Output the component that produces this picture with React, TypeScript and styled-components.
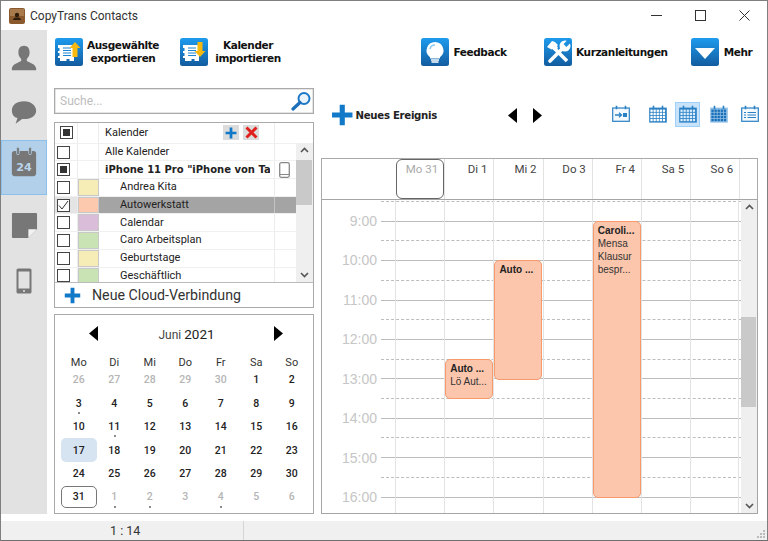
import React from "react";
import styled, { createGlobalStyle } from "styled-components";

const Global = createGlobalStyle`
  html, body { margin: 0; padding: 0; background: #fff; }
  * { box-sizing: border-box; }
  body { font-family: Roboto, "Liberation Sans", sans-serif; color: #222; }
`;

const Win = styled.div`
  width: 768px; height: 541px; display: flex; flex-direction: column;
  border: 1px solid #7f7f7f; border-bottom-color: #6f6f6f; background: #fff; overflow: hidden;
`;
const TitleBar = styled.div`
  height: 29px; display: flex; align-items: center; padding-left: 8px; flex: none;
`;
const TitleText = styled.span`
  margin-left: 5px; font-size: 12px; color: #333; width: 120px; white-space: nowrap;
`;
const WinButtons = styled.div`
  margin-left: auto; display: flex; align-items: center; gap: 33px; padding-right: 17px;
`;
const Middle = styled.div`
  flex: 1; display: flex; min-height: 0;
`;
const Sidebar = styled.nav`
  width: 46px; flex: none; background: #e2e2e2; display: flex; flex-direction: column;
`;
const SideItem = styled.div<{ $active?: boolean }>`
  height: 55px; background: ${p => (p.$active ? "#b3d0ea" : "transparent")};
  border: 1px solid ${p => (p.$active ? "#8cc0ec" : "transparent")};
  display: flex; align-items: center; justify-content: center;
`;
const Content = styled.div`
  flex: 1; display: flex; flex-direction: column; min-width: 0;
`;
const Toolbar = styled.div`
  height: 55px; flex: none; display: flex; align-items: flex-start; padding: 8px 0 0 8px;
`;
const ToolButton = styled.div<{ $ml?: number }>`
  display: flex; align-items: center; height: 28px; margin-left: ${p => p.$ml ?? 0}px;
`;
const ToolLabel = styled.div<{ $w: number }>`
  width: ${p => p.$w}px; margin-left: 4px; font: bold 10.5px/13px "DejaVu Sans", sans-serif;
  text-align: center; color: #111; white-space: nowrap; letter-spacing: -0.4px;
`;
const Panels = styled.div`
  flex: 1; display: flex; padding: 3px 0 0 7px; min-height: 0;
`;
const LeftCol = styled.div`
  width: 260px; flex: none; display: flex; flex-direction: column;
`;
const Search = styled.div`
  height: 26px; border: 1px solid #aaa; box-shadow: inset 0 0 0 0.5px #ccc; display: flex; align-items: center;
  padding: 0 1px 0 5px; justify-content: space-between; font-size: 12px; color: #bdbdbd;
`;
const CalTable = styled.div`
  margin-top: 8px; height: 160px; border: 1px solid #aaa; border-bottom: none; display: flex; overflow: hidden;
`;
const TableMain = styled.div`
  flex: 1; min-width: 0; display: flex; flex-direction: column; overflow: hidden;
`;
const Row = styled.div<{ $head?: boolean }>`
  display: grid; grid-template-columns: 23px 21px 176px 22px; flex: none;
  height: ${p => (p.$head ? "20.7px" : "17.7px")}; border-bottom: 1px solid #f0f0f0;
  font-size: 11px; line-height: 16px;
`;
const CheckCell = styled.div<{ $sel?: boolean; $head?: boolean }>`
  display: flex; align-items: center; padding-left: ${p => (p.$head ? "5px" : "2px")};
  border-right: 1px solid #ececec; background: ${p => (p.$sel ? "#e4e4e4" : "transparent")};
`;
const Box = styled.div`
  width: 13px; height: 13px; border: 1px solid #444; background: #fff;
  display: flex; align-items: center; justify-content: center;
`;
const Inner = styled.div`
  width: 7px; height: 7px; background: #333;
`;
const Swatch = styled.div<{ $c?: string }>`
  background: ${p => p.$c ?? "transparent"};
  border: ${p => (p.$c ? "1px solid #c8c8c8" : "none")};
  border-right: 1px solid ${p => (p.$c ? "#c8c8c8" : "#ececec")};
`;
const NameCell = styled.div<{ $sel?: boolean; $indent?: boolean; $bold?: boolean }>`
  padding-left: ${p => (p.$indent ? "21px" : "6px")};
  background: ${p => (p.$sel ? "#a4a4a4" : "transparent")};
  font: ${p => (p.$bold ? 'bold 10px/16px "DejaVu Sans", sans-serif' : "inherit")};
  border-right: 1px solid ${p => (p.$sel ? "#c4c4c4" : "#ececec")};
  overflow: hidden; white-space: nowrap; padding-right: 4px;
  display: flex; align-items: center; color: #222; position: relative;
`;
const NameClip = styled.span`
  display: block; overflow: hidden; width: 100%;
`;
const HeadActions = styled.div`
  margin-left: auto; display: flex; gap: 4px; padding-right: 11px;
`;
const MiniBtn = styled.div`
  width: 16px; height: 15px; background: #dcdcdc; display: flex; align-items: center; justify-content: center;
`;
const DevCell = styled.div<{ $sel?: boolean }>`
  display: flex; align-items: center; justify-content: center; padding-right: 3px;
  border-right: 1px solid #ececec; background: ${p => (p.$sel ? "#a4a4a4" : "transparent")};
`;
const VScroll = styled.div<{ $w: number; $fill?: boolean }>`
  width: ${p => p.$w}px; flex: ${p => (p.$fill ? 1 : "none")}; background: #efefef; display: flex; flex-direction: column; position: relative;
  align-items: center; justify-content: space-between; padding: 4px 0;
`;
const Thumb = styled.div<{ $top: number; $h: number }>`
  position: absolute; left: 0; right: 1px; top: ${p => p.$top}px; height: ${p => p.$h}px; background: #c9c9c9;
`;
const ScrollTop = styled.div`
  width: 17px; flex: none; display: flex; flex-direction: column;
`;
const ScrollHead = styled.div`
  height: 20px; background: #fff; flex: none;
`;
const CloudRow = styled.div`
  height: 26px; border: 1px solid #aaa; border-top: 1px solid #bbb; display: flex; align-items: center; padding-left: 9px; gap: 11px;
  font-size: 14.2px; color: #333; white-space: nowrap;
`;
const MiniCal = styled.div`
  margin-top: 6px; height: 200px; border: 1px solid #aaa; padding: 0 4px 0 6px;
`;
const MiniHead = styled.div`
  height: 36px; display: flex; align-items: center; justify-content: center; position: relative;
  padding: 1px 26px 0 28px;
`;
const MonthName = styled.div`
  flex: 1; text-align: center; font-size: 12px; color: #444; padding-left: 1px;
`;
const YearName = styled.span`
  font-size: 13.5px; color: #222; margin-left: 3px;
`;
const MiniGrid = styled.div`
  display: grid; grid-template-columns: repeat(7, 35.5px); grid-template-rows: 14.3px repeat(6, 23.4px); margin-top: 3px;
`;
const DowCell = styled.div`
  height: 14.3px; text-align: center; font-size: 11px; line-height: 18px; color: #333;
`;
const DayCell = styled.div<{ $muted?: boolean; $sel?: boolean; $today?: boolean }>`
  position: relative; display: flex; align-items: center; justify-content: center; font-size: 10.5px;
  font-weight: 500; color: ${p => (p.$muted ? "#b5b5b5" : "#222")};
  background: ${p => (p.$sel ? "#d6e4f2" : "transparent")};
  border-radius: 5px;
  border: ${p => (p.$today ? "1px solid #777" : "none")};
  margin: ${p => (p.$today ? "1px 0" : "0")};
`;
const Dot = styled.i`
  position: absolute; width: 2px; height: 2px; background: #666; left: 17px; bottom: 1px; border-radius: 50%;
`;
const RightCol = styled.div`
  width: 437px; margin-left: 7px; flex: none; display: flex; flex-direction: column;
`;
const RightBar = styled.div`
  height: 70px; flex: none; display: flex; align-items: flex-start; padding: 14px 0 0 10px;
`;
const NewEvent = styled.div`
  display: flex; align-items: center; height: 26px; gap: 2px; font: bold 10.2px "DejaVu Sans", sans-serif; color: #222;
  width: 106px; white-space: nowrap; letter-spacing: -0.3px;
`;
const NavArrows = styled.div`
  margin-left: 71px; display: flex; gap: 16px; height: 26px; align-items: center;
`;
const ViewIcons = styled.div`
  margin: -1px -3px 0 auto; display: flex; align-items: center; height: 26px;
`;
const ViewIcon = styled.div<{ $on?: boolean; $w: number }>`
  width: ${p => p.$w}px; height: 25px; display: flex; align-items: center; justify-content: center;
  background: ${p => (p.$on ? "#c9e3fb" : "transparent")};
  border: 1px solid ${p => (p.$on ? "#9ed0f9" : "transparent")};
`;
const DaysHeader = styled.div`
  height: 41px; flex: none; border: 1px solid #aaa; border-bottom: none; display: flex;
`;
const HeaderGap = styled.div`
  width: 74px; flex: none;
`;
const HeadDay = styled.div<{ $today?: boolean }>`
  width: 49.2px; flex: none; border-right: 1px solid #e2e2e2; text-align: right; padding: 2px 6px 0 0;
  font-size: 11.5px; line-height: 16px; color: ${p => (p.$today ? "#aaa" : "#444")};
  position: relative;
`;
const TodayRing = styled.div`
  position: absolute; left: 0; right: 0; top: 0; bottom: 0; border: 1px solid #666; border-radius: 6px;
`;
const GridBody = styled.div`
  height: 315px; flex: none; border: 1px solid #a5a5a5; display: flex; overflow: hidden;
`;
const TimeCol = styled.div`
  width: 59px; flex: none; padding-top: 2px; display: flex; flex-direction: column; align-items: flex-end; overflow: hidden;
`;
const TimeLabel = styled.div`
  flex: none; height: 39.43px; padding-right: 4px; font: 14px/39.43px "Liberation Sans", sans-serif; color: #c6c6c6;
`;
const Canvas = styled.div`
  flex: 1; position: relative; overflow: hidden;
`;
const Slot = styled.div<{ $half?: boolean; $first?: boolean }>`
  height: ${p => (p.$first ? "2px" : "19.715px")};
  border-bottom: 1px ${p => (p.$half ? "dashed #bdbdbd" : "solid #bcbcbc")};
`;
const DayCols = styled.div`
  position: absolute; top: 0; bottom: 0; left: 14px; display: flex;
`;
const DayCol = styled.div`
  width: 49.2px; flex: none; position: relative; border-left: 1px solid #e3e3e3;
  &:last-child { border-right: 1px solid #e3e3e3; }
`;
const Event = styled.div<{ $top: number; $h: number }>`
  position: absolute; left: 0; width: 48px; top: ${p => p.$top}px; height: ${p => p.$h}px;
  background: #fcc6ac; border: 1px solid #f79a6b; border-radius: 5px; padding: 2px 3px 0 4px;
  font: 10px/13px "Liberation Sans", sans-serif; color: #333; overflow: hidden;
`;
const EvTitle = styled.div`
  font-weight: 700; color: #222; white-space: nowrap;
`;
const EvLine = styled.div`
  white-space: nowrap;
`;
const StatusBar = styled.div`
  height: 19px; flex: none; margin-top: 7px; background: #f0f0f0; display: flex; align-items: center; font-size: 12.5px; color: #333; position: relative;
`;
const StatusCount = styled.div`
  width: 243px; padding-left: 109px; border-right: 1px solid #d5d5d5; height: 100%; line-height: 20px; white-space: nowrap;
`;
const Grip = styled.svg`
  position: absolute; right: 1px; bottom: 1px;
`;

const Tile: React.FC<{ id: string; children: React.ReactNode }> = ({ id, children }) => (
  <svg width="28" height="28" viewBox="0 0 28 28">
    <defs>
      <linearGradient id={id} x1="0" y1="0" x2="0" y2="1">
        <stop offset="0" stopColor="#1e9bee" />
        <stop offset="1" stopColor="#125c9f" />
      </linearGradient>
    </defs>
    <rect width="28" height="28" rx="2.5" fill={`url(#${id})`} />
    {children}
  </svg>
);

const Ticket = () => (
  <g>
    <path d="M3 7h16v16h-4.5v-2h-3v2H5v-3H3v-2h1.5v-3H3v-2h1.5V10H3z" fill="#fff" />
    <path d="M8 10h8M8 12.5h8M8 15h8M8 17.5h8" stroke="#1a85d4" strokeWidth="1.2" />
  </g>
);

const Plus: React.FC<{ s: number }> = ({ s }) => (
  <svg width={s} height={s} viewBox="0 0 22 22">
    <path d="M8.5 1h5v7.5H21v5h-7.5V21h-5v-7.5H1v-5h7.5z" fill="#1278c8" />
  </svg>
);

const Tri: React.FC<{ dir: "l" | "r" }> = ({ dir }) => (
  <svg width="9" height="15" viewBox="0 0 9 15">
    <path d={dir === "l" ? "M9 0v15L0 7.5z" : "M0 0v15l9-7.5z"} fill="#000" />
  </svg>
);

const Chev: React.FC<{ up?: boolean }> = ({ up }) => (
  <svg width="9" height="6" viewBox="0 0 9 6">
    <path d={up ? "M1 5l3.5-3.5L8 5" : "M1 1l3.5 3.5L8 1"} stroke="#555" strokeWidth="1.6" fill="none" />
  </svg>
);

const CalGlyph: React.FC<{ kind: "import" | "week" | "day" | "month" | "list" }> = ({ kind }) => {
  const c = "#2a80c4";
  if (kind === "import" || kind === "list") {
    return (
      <svg width="18" height="18" viewBox="0 0 18 18">
        <rect x="0.7" y="3" width="16.6" height="13.3" fill="#f3f9fe" stroke={c} strokeWidth="1.2" />
        <path d="M4.5 0.8v3.5M13.5 0.8v3.5" stroke={c} strokeWidth="1.6" />
        {kind === "import" ? (
          <>
            <path d="M3 10h6M7 7.8l2.5 2.2L7 12.2" stroke={c} strokeWidth="1.3" fill="none" />
            <rect x="11" y="8" width="4" height="4" fill={c} />
          </>
        ) : (
          <path d="M3 7.5h2M6.5 7.5h8.5M3 10h2M6.5 10h8.5M3 12.5h2M6.5 12.5h8.5" stroke={c} strokeWidth="1.2" />
        )}
      </svg>
    );
  }
  const cellFill = kind === "month" ? "#1a70b8" : kind === "day" ? "#d8ecfd" : "#fff";
  const cells: React.ReactNode[] = [];
  for (let r = 0; r < 4; r++)
    for (let k = 0; k < 5; k++)
      cells.push(<rect key={r + "-" + k} x={1.4 + k * 3.1} y={4.6 + r * 3.1} width="2.3" height="2.3" fill={cellFill} />);
  return (
    <svg width="18" height="18" viewBox="0 0 18 18">
      <rect x="0.2" y="2.6" width="17.6" height="15" fill={kind === "month" ? "#8dbde4" : c} />
      <path d="M4.5 0.8v3.5M13.5 0.8v3.5" stroke={c} strokeWidth="1.6" />
      {cells}
    </svg>
  );
};

const rows = [
  { name: "Alle Kalender" },
  { name: 'iPhone 11 Pro "iPhone von Tat', bold: true, tri: true, device: true },
  { name: "Andrea Kita", color: "#f6edb6", indent: true },
  { name: "Autowerkstatt", color: "#fdc9ae", indent: true, sel: true },
  { name: "Calendar", color: "#d9bdd9", indent: true },
  { name: "Caro Arbeitsplan", color: "#cae3b5", indent: true },
  { name: "Geburtstage", color: "#f6edb6", indent: true },
  { name: "Geschäftlich", color: "#cae3b5", indent: true },
];

const dow = ["Mo", "Di", "Mi", "Do", "Fr", "Sa", "So"];
type D = { t: number; m?: boolean; dot?: boolean; sel?: boolean; today?: boolean };
const days: D[] = [
  ...[26, 27, 28, 29, 30].map(t => ({ t, m: true })),
  { t: 1 }, { t: 2 }, { t: 3, dot: true },
  ...[4, 5, 6, 7, 8, 9, 10].map(t => ({ t })),
  { t: 11, dot: true },
  ...[12, 13, 14, 15, 16].map(t => ({ t })),
  { t: 17, sel: true },
  ...[18, 19, 20, 21, 22, 23, 24, 25, 26, 27, 28, 29, 30].map(t => ({ t })),
  { t: 31, today: true },
  { t: 1, m: true, dot: true }, { t: 2, m: true, dot: true }, { t: 3, m: true }, { t: 4, m: true, dot: true }, { t: 5, m: true }, { t: 6, m: true },
];

const headDays = ["Mo 31", "Di 1", "Mi 2", "Do 3", "Fr 4", "Sa 5", "So 6"];
const hours = [9, 10, 11, 12, 13, 14, 15, 16];
const H = 39.43;
const top = (h: number) => 21 + (h - 9) * H;

const slotFlags = Array.from({ length: 16 }, (_, i) => i % 2 === 1);

export default function App() {
  return (
    <Win>
      <Global />
      <TitleBar>
        <svg width="16" height="16" viewBox="0 0 16 16">
          <rect width="16" height="16" rx="2" fill="#8a5a2e" />
          <rect x="1" y="1" width="14" height="7" fill="#a97b4c" />
          <circle cx="8" cy="7" r="2.2" fill="#2f1c0c" />
          <path d="M4 12c0-2 2-2.5 4-2.5s4 .5 4 2.5z" fill="#2f1c0c" />
        </svg>
        <TitleText>CopyTrans Contacts</TitleText>
        <WinButtons>
          <svg width="11" height="11" viewBox="0 0 11 11"><path d="M0 5.5h11" stroke="#333" strokeWidth="1" /></svg>
          <svg width="11" height="11" viewBox="0 0 11 11"><rect x="0.5" y="0.5" width="10" height="10" fill="none" stroke="#333" /></svg>
          <svg width="11" height="11" viewBox="0 0 11 11"><path d="M0.5 0.5l10 10M10.5 0.5l-10 10" stroke="#333" /></svg>
        </WinButtons>
      </TitleBar>
      <Middle>
        <Sidebar>
          <SideItem>
            <svg width="28" height="28" viewBox="0 0 30 30">
              <path d="M15 2c-4 0-6 3-6 7 0 3 1 5 3 7v2c-2 2-9 3-10 8v2h26v-2c-1-5-8-6-10-8v-2c2-2 3-4 3-7 0-4-2-7-6-7z" fill="#777" />
            </svg>
          </SideItem>
          <SideItem>
            <svg width="28" height="25" viewBox="0 0 30 26">
              <path d="M15 1C7 1 2 5 2 11c0 4 2 7 6 8l-2 6 7-5h2c8 0 13-4 13-9s-5-10-13-10z" fill="#777" />
            </svg>
          </SideItem>
          <SideItem $active>
            <svg width="28" height="36" viewBox="0 0 30 38" style={{ marginBottom: 8 }}>
              <rect x="2" y="5" width="26" height="27" rx="3" fill="#777" />
              <rect x="7" y="1" width="3" height="8" rx="1.5" fill="#777" stroke="#b3d0ea" strokeWidth="0.8" />
              <rect x="20" y="1" width="3" height="8" rx="1.5" fill="#777" stroke="#b3d0ea" strokeWidth="0.8" />
              <text x="15" y="27" textAnchor="middle" fontFamily="DejaVu Sans" fontWeight="700" fontSize="12" fill="#b9d4ea">24</text>
            </svg>
          </SideItem>
          <SideItem>
            <svg width="27" height="27" viewBox="0 0 28 28" style={{ marginTop: 5 }}>
              <path d="M2 1h24a1 1 0 0 1 1 1v16l-9 9H2a1 1 0 0 1-1-1V2a1 1 0 0 1 1-1z" fill="#777" />
              <path d="M27 18l-9 9v-9z" fill="#f2f2f2" />
            </svg>
          </SideItem>
          <SideItem>
            <svg width="16" height="26" viewBox="0 0 16 26" style={{ marginTop: 6 }}>
              <rect x="0.5" y="0.5" width="15" height="25" rx="1.5" fill="#777" />
              <rect x="2.5" y="3.5" width="11" height="17" fill="#e2e2e2" />
              <circle cx="8" cy="23" r="1" fill="#e2e2e2" />
            </svg>
          </SideItem>
        </Sidebar>
        <Content>
          <Toolbar>
            <ToolButton>
              <Tile id="t1">
                <Ticket />
                <path d="M20 4l5.5 6H22.5v9h-5v-9h-3z" fill="#f7b90f" />
              </Tile>
              <ToolLabel $w={72}>Ausgewählte<br />exportieren</ToolLabel>
            </ToolButton>
            <ToolButton $ml={21}>
              <Tile id="t2">
                <Ticket />
                <path d="M17.5 4h5v9h3l-5.5 6-5.5-6h3z" fill="#f7b90f" />
              </Tile>
              <ToolLabel $w={72}>Kalender<br />importieren</ToolLabel>
            </ToolButton>
            <ToolButton $ml={137}>
              <Tile id="t3">
                <path d="M14 4a8.5 8.5 0 0 0-5 15.3v1.2h10v-1.2A8.5 8.5 0 0 0 14 4z" fill="#fff" />
                <path d="M10 22h8M10.5 24h7" stroke="#fff" strokeWidth="1.3" />
                <path d="M9 11a5 5 0 0 1 5-4" stroke="#8ccaf5" strokeWidth="1.5" fill="none" />
              </Tile>
              <ToolLabel $w={54}>Feedback</ToolLabel>
            </ToolButton>
            <ToolButton $ml={37}>
              <Tile id="t4">
                <path d="M9 9L23 23" stroke="#fff" strokeWidth="3.6" />
                <path d="M3 9l5-6 3 1 3 3-1 1 1 2-3 3-2-2-1.500 0.500z" fill="#fff" />
                <path d="M20 9L6 23" stroke="#fff" strokeWidth="3.6" strokeLinecap="round" />
                <circle cx="21" cy="8" r="5.500" fill="#fff" />
                <path d="M21 7.500L26 2.500" stroke="#1b8ee0" strokeWidth="4" />
              </Tile>
              <ToolLabel $w={91}>Kurzanleitungen</ToolLabel>
            </ToolButton>
            <ToolButton $ml={24}>
              <Tile id="t5">
                <path d="M4 10h20L14 21z" fill="#fff" />
              </Tile>
              <ToolLabel $w={30}>Mehr</ToolLabel>
            </ToolButton>
          </Toolbar>
          <Panels>
            <LeftCol>
              <Search>
                <span>Suche...</span>
                <svg width="22" height="20" viewBox="0 0 22 20">
                  <circle cx="14" cy="7.5" r="5.5" fill="#eaf4fc" stroke="#1c78c4" strokeWidth="2" />
                  <path d="M10 11.5L3 18" stroke="#1c6fb8" strokeWidth="3.2" strokeLinecap="round" />
                </svg>
              </Search>
              <CalTable>
                <TableMain>
                  <Row $head>
                    <CheckCell $head><Box><Inner /></Box></CheckCell>
                    <Swatch />
                    <NameCell>
                      Kalender
                      <HeadActions>
                        <MiniBtn><Plus s={12} /></MiniBtn>
                        <MiniBtn>
                          <svg width="13" height="13" viewBox="0 0 13 13"><path d="M1.5 1.5l10 10M11.5 1.5l-10 10" stroke="#e0201c" strokeWidth="3" /></svg>
                        </MiniBtn>
                      </HeadActions>
                    </NameCell>
                    <DevCell />
                  </Row>
                  {rows.map(r => (
                    <Row key={r.name}>
                      <CheckCell $sel={r.sel}>
                        <Box>
                          {r.tri && <Inner />}
                          {r.sel && (
                            <svg width="11" height="11" viewBox="0 0 11 11"><path d="M1 5.5l3 3.5 6-8" stroke="#333" strokeWidth="1" fill="none" /></svg>
                          )}
                        </Box>
                      </CheckCell>
                      <Swatch $c={r.color} />
                      <NameCell $sel={r.sel} $indent={r.indent} $bold={r.bold}><NameClip>{r.name}</NameClip></NameCell>
                      <DevCell $sel={r.sel}>
                        {r.device && (
                          <svg width="11" height="16" viewBox="0 0 11 16">
                            <rect x="0.7" y="0.7" width="9.6" height="14.6" rx="1.5" fill="none" stroke="#888" strokeWidth="1.3" />
                            <path d="M1 12.5h9" stroke="#888" />
                          </svg>
                        )}
                      </DevCell>
                    </Row>
                  ))}
                </TableMain>
                <ScrollTop>
                  <ScrollHead />
                  <VScroll $w={17} $fill>
                    <Chev up />
                    <Thumb $top={17} $h={45} />
                    <Chev />
                  </VScroll>
                </ScrollTop>
              </CalTable>
              <CloudRow>
                <Plus s={17} />
                Neue Cloud-Verbindung
              </CloudRow>
              <MiniCal>
                <MiniHead>
                  <Tri dir="l" />
                  <MonthName>Juni<YearName>2021</YearName></MonthName>
                  <Tri dir="r" />
                </MiniHead>
                <MiniGrid>
                  {dow.map(d => <DowCell key={d}>{d}</DowCell>)}
                  {days.map((d, i) => (
                    <DayCell key={i} $muted={d.m} $sel={d.sel} $today={d.today}>
                      {d.t}
                      {d.dot && <Dot />}
                    </DayCell>
                  ))}
                </MiniGrid>
              </MiniCal>
            </LeftCol>
            <RightCol>
              <RightBar>
                <NewEvent>
                  <Plus s={24} />
                  Neues Ereignis
                </NewEvent>
                <NavArrows>
                  <Tri dir="l" />
                  <Tri dir="r" />
                </NavArrows>
                <ViewIcons>
                  <ViewIcon $w={41}><CalGlyph kind="import" /></ViewIcon>
                  <ViewIcon $w={34}><CalGlyph kind="week" /></ViewIcon>
                  <ViewIcon $w={25} $on><CalGlyph kind="day" /></ViewIcon>
                  <ViewIcon $w={38}><CalGlyph kind="month" /></ViewIcon>
                  <ViewIcon $w={23}><CalGlyph kind="list" /></ViewIcon>
                </ViewIcons>
              </RightBar>
              <DaysHeader>
                <HeaderGap />
                {headDays.map((d, i) => (
                  <HeadDay key={d} $today={i === 0}>
                    {d}
                    {i === 0 && <TodayRing />}
                  </HeadDay>
                ))}
              </DaysHeader>
              <GridBody>
                <TimeCol>
                  {hours.map(h => <TimeLabel key={h}>{h}:00</TimeLabel>)}
                </TimeCol>
                <Canvas>
                  <Slot $first $half />
                  {slotFlags.map((half, i) => <Slot key={i} $half={half} />)}
                  <DayCols>
                    {headDays.map((d, i) => (
                      <DayCol key={d}>
                        {i === 1 && (
                          <Event $top={top(12.5)} $h={H + 1}>
                            <EvTitle>Auto ...</EvTitle>
                            <EvLine>Lö Aut...</EvLine>
                          </Event>
                        )}
                        {i === 2 && (
                          <Event $top={top(10)} $h={H * 3 + 1}>
                            <EvTitle>Auto ...</EvTitle>
                          </Event>
                        )}
                        {i === 4 && (
                          <Event $top={top(9)} $h={H * 7 + 1}>
                            <EvTitle>Caroli...</EvTitle>
                            <EvLine>Mensa</EvLine>
                            <EvLine>Klausur</EvLine>
                            <EvLine>bespr...</EvLine>
                          </Event>
                        )}
                      </DayCol>
                    ))}
                  </DayCols>
                </Canvas>
                <VScroll $w={16}>
                  <Chev up />
                  <Thumb $top={117} $h={90} />
                  <Chev />
                </VScroll>
              </GridBody>
            </RightCol>
          </Panels>
        </Content>
      </Middle>
      <StatusBar>
        <StatusCount>1 : 14</StatusCount>
        <Grip width="10" height="10" viewBox="0 0 10 10">
          <path d="M7 1h2v2H7zM4 4h2v2H4zM7 4h2v2H7zM1 7h2v2H1zM4 7h2v2H4zM7 7h2v2H7z" fill="#bbb" />
        </Grip>
      </StatusBar>
    </Win>
  );
}
